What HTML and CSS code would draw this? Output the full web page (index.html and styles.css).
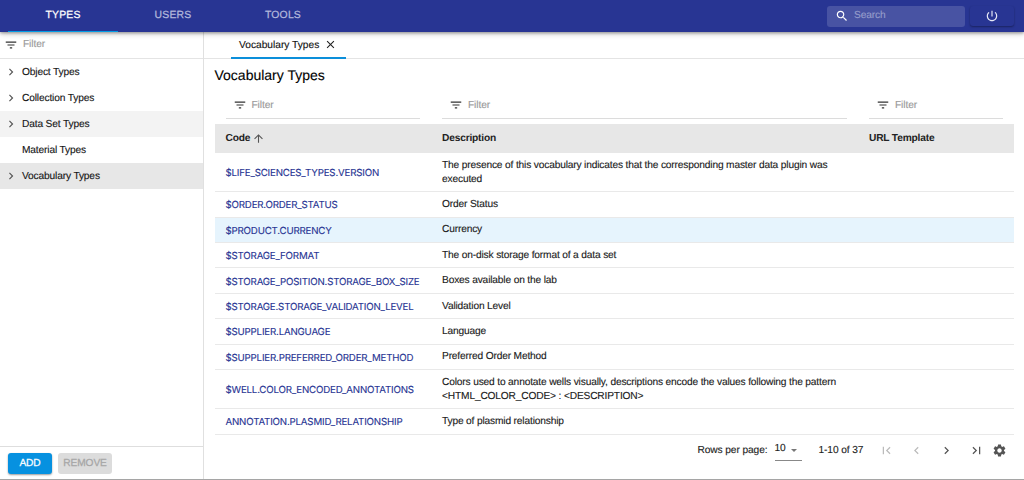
FILE: index.html
```
<!DOCTYPE html>
<html lang="en">
<head>
<meta charset="utf-8">
<title>Vocabulary Types</title>
<link rel="stylesheet" href="styles.css">
</head>
<body>
<svg class="defs" width="0" height="0">
  <symbol id="filter" viewBox="0 0 24 24"><path d="M10 18h4v-2h-4v2zM3 6v2h18V6H3zm3 7h12v-2H6v2z"/></symbol>
  <symbol id="right" viewBox="0 0 24 24"><path d="M10 6L8.59 7.41 13.17 12l-4.58 4.59L10 18l6-6z"/></symbol>
  <symbol id="left" viewBox="0 0 24 24"><path d="M15.41 7.41L14 6l-6 6 6 6 1.41-1.41L10.83 12z"/></symbol>
  <symbol id="first" viewBox="0 0 24 24"><path d="M18.41 16.59L13.82 12l4.59-4.59L17 6l-6 6 6 6zM6 6h2v12H6z"/></symbol>
  <symbol id="last" viewBox="0 0 24 24"><path d="M5.59 7.41L10.18 12l-4.59 4.59L7 18l6-6-6-6zM16 6h2v12h-2z"/></symbol>
</svg>
<div class="app">
  <header class="bar">
    <nav class="tabs">
      <span class="tab active">TYPES</span><span class="tab">USERS</span><span class="tab">TOOLS</span>
    </nav>
    <div class="search">
      <svg class="icon search-icon" viewBox="0 0 24 24"><path d="M15.5 14h-.79l-.28-.27C15.41 12.59 16 11.11 16 9.5 16 5.91 13.09 3 9.5 3S3 5.91 3 9.5 5.91 16 9.5 16c1.61 0 3.09-.59 4.23-1.57l.27.28v.79l5 4.99L20.49 19l-4.99-5zm-6 0C7.01 14 5 11.99 5 9.5S7.01 5 9.5 5 14 7.01 14 9.5 11.99 14 9.5 14z"/></svg>
      <span class="search-text">Search</span>
    </div>
    <div class="power"><svg class="icon power-icon" viewBox="0 0 24 24"><path d="M13 3h-2v10h2V3zm4.83 2.17l-1.42 1.42C17.99 7.86 19 9.81 19 12c0 3.87-3.13 7-7 7s-7-3.13-7-7c0-2.19 1.01-4.14 2.58-5.42L6.17 5.17C4.23 6.82 3 9.26 3 12c0 4.97 4.03 9 9 9s9-4.03 9-9c0-2.74-1.23-5.18-3.17-6.83z"/></svg></div>
  </header>
  <div class="body">
    <aside class="side">
      <div class="side-filter"><svg class="icon filter-icon"><use href="#filter"/></svg><span class="hint">Filter</span></div>
      <ul class="tree">
        <li class="node"><svg class="icon chevron"><use href="#right"/></svg><span>Object Types</span></li>
        <li class="node"><svg class="icon chevron"><use href="#right"/></svg><span>Collection Types</span></li>
        <li class="node hover"><svg class="icon chevron"><use href="#right"/></svg><span>Data Set Types</span></li>
        <li class="node leaf"><span>Material Types</span></li>
        <li class="node selected"><svg class="icon chevron"><use href="#right"/></svg><span>Vocabulary Types</span></li>
      </ul>
      <div class="side-actions"><span class="btn add">ADD</span><span class="btn remove">REMOVE</span></div>
    </aside>
    <main class="main">
      <div class="pages">
        <div class="page-tab"><span>Vocabulary Types</span><svg class="icon close" viewBox="0 0 24 24"><path d="M19 6.41L17.59 5 12 10.59 6.41 5 5 6.41 10.59 12 5 17.59 6.41 19 12 13.41 17.59 19 19 17.59 13.41 12z"/></svg></div>
      </div>
      <div class="content">
        <h1 class="title">Vocabulary Types</h1>
        <div class="row filters">
          <div class="cell"><div class="field"><svg class="icon filter-icon"><use href="#filter"/></svg><span class="hint">Filter</span></div></div>
          <div class="cell"><div class="field"><svg class="icon filter-icon"><use href="#filter"/></svg><span class="hint">Filter</span></div></div>
          <div class="cell"><div class="field"><svg class="icon filter-icon"><use href="#filter"/></svg><span class="hint">Filter</span></div></div>
        </div>
        <div class="row head">
          <div class="cell">Code<svg class="icon sort" viewBox="0 0 24 24"><path d="M4 12l1.41 1.41L11 7.83V20h2V7.83l5.58 5.59L20 12l-8-8-8 8z"/></svg></div>
          <div class="cell">Description</div>
          <div class="cell">URL Template</div>
        </div>
        <div class="row item tall"><div class="cell link">$LIFE_SCIENCES_TYPES.VERSION</div><div class="cell desc">The presence of this vocabulary indicates that the corresponding master data plugin was<br>executed</div></div>
        <div class="row item"><div class="cell link">$ORDER.ORDER_STATUS</div><div class="cell desc">Order Status</div></div>
        <div class="row item current"><div class="cell link">$PRODUCT.CURRENCY</div><div class="cell desc">Currency</div></div>
        <div class="row item"><div class="cell link">$STORAGE_FORMAT</div><div class="cell desc">The on-disk storage format of a data set</div></div>
        <div class="row item"><div class="cell link">$STORAGE_POSITION.STORAGE_BOX_SIZE</div><div class="cell desc">Boxes available on the lab</div></div>
        <div class="row item"><div class="cell link">$STORAGE.STORAGE_VALIDATION_LEVEL</div><div class="cell desc">Validation Level</div></div>
        <div class="row item"><div class="cell link">$SUPPLIER.LANGUAGE</div><div class="cell desc">Language</div></div>
        <div class="row item"><div class="cell link">$SUPPLIER.PREFERRED_ORDER_METHOD</div><div class="cell desc">Preferred Order Method</div></div>
        <div class="row item tall"><div class="cell link">$WELL.COLOR_ENCODED_ANNOTATIONS</div><div class="cell desc">Colors used to annotate wells visually, descriptions encode the values following the pattern<br>&lt;HTML_COLOR_CODE&gt; : &lt;DESCRIPTION&gt;</div></div>
        <div class="row item"><div class="cell link">ANNOTATION.PLASMID_RELATIONSHIP</div><div class="cell desc">Type of plasmid relationship</div></div>
        <div class="pager">
          <span class="rows-label">Rows per page:</span>
          <span class="select">10<i class="caret"></i></span>
          <span class="range">1-10 of 37</span>
          <svg class="icon nav off"><use href="#first"/></svg>
          <svg class="icon nav off"><use href="#left"/></svg>
          <svg class="icon nav"><use href="#right"/></svg>
          <svg class="icon nav"><use href="#last"/></svg>
          <svg class="icon gear" viewBox="0 0 24 24"><path d="M19.14 12.94c.04-.3.06-.61.06-.94 0-.32-.02-.64-.07-.94l2.03-1.58c.18-.14.23-.41.12-.61l-1.92-3.32c-.12-.22-.37-.29-.59-.22l-2.39.96c-.5-.38-1.03-.7-1.62-.94l-.36-2.54c-.04-.24-.24-.41-.48-.41h-3.84c-.24 0-.43.17-.47.41l-.36 2.54c-.59.24-1.13.57-1.62.94l-2.39-.96c-.22-.08-.47 0-.59.22L2.74 8.87c-.12.21-.08.47.12.61l2.03 1.58c-.05.3-.09.63-.09.94s.02.64.07.94l-2.03 1.58c-.18.14-.23.41-.12.61l1.92 3.32c.12.22.37.29.59.22l2.39-.96c.5.38 1.03.7 1.62.94l.36 2.54c.05.24.24.41.48.41h3.84c.24 0 .44-.17.47-.41l.36-2.54c.59-.24 1.13-.56 1.62-.94l2.39.96c.22.08.47 0 .59-.22l1.92-3.32c.12-.22.07-.47-.12-.61l-2.01-1.58zM12 15.6c-1.98 0-3.6-1.62-3.6-3.6s1.62-3.6 3.6-3.6 3.6 1.62 3.6 3.6-1.62 3.6-3.6 3.6z"/></svg>
        </div>
      </div>
    </main>
  </div>
</div>
</body>
</html>
```
FILE: styles.css
```
* { box-sizing: border-box; }
body { margin: 0; font-family: "Liberation Sans", Arial, sans-serif; font-size: 10.2px; letter-spacing: -.1px; color: #202020; background: #fff; overflow: hidden; text-rendering: geometricPrecision; -webkit-text-stroke: .12px; }
.defs { display: none; }
.icon { display: block; width: 16px; height: 16px; flex: none; fill: #555; }
.app { width: 1024px; height: 480px; display: flex; flex-direction: column; border-bottom: 1px solid #a5a5a5; }

.bar { position: relative; height: 32px; flex: none; display: flex; align-items: center; padding: 0 10px 0 8px; background: #283593; box-shadow: 0 1px 3px rgba(0,0,0,.35), 0 2px 6px rgba(0,0,0,.18); }
.tabs { display: flex; flex: 1; height: 32px; }
.tab { width: 110px; height: 32px; line-height: 32px; text-align: center; font-size: 10.4px; letter-spacing: .2px; color: #b4b9dc; -webkit-text-stroke: .25px; }
.tab.active { color: #fff; background: linear-gradient(#039be5, #039be5) left bottom / 100% 1px no-repeat; }
.search { display: flex; align-items: center; width: 138px; height: 21px; margin-right: 5px; padding: 0 0 1px 8px; border-radius: 3px; background: #4853a3; }
.search-icon { width: 14px; height: 14px; margin-top: 1px; fill: #fff; }
.search-text { margin-left: 5px; color: #969dcb; }
.power { display: flex; align-items: center; justify-content: center; width: 44px; height: 20px; border-radius: 3px; background: #283593; box-shadow: 0 1px 2px rgba(0,0,0,.35); }
.power-icon { width: 14px; height: 14px; fill: #e8eaf6; }

.body { flex: 1; display: flex; min-height: 0; }
.side { width: 204px; display: flex; flex-direction: column; border-right: 1px solid #e0e0e0; }
.side-filter { display: flex; align-items: center; height: 27px; padding: 0 0 1px 4px; border-bottom: 1px solid #e4e4e4; }
.filter-icon { width: 14px; height: 14px; fill: #333; }
.hint { margin-left: 5px; color: #999; }
.tree { flex: 1; margin: 0; padding: 0; list-style: none; color: #151515; letter-spacing: -.15px; }
.node { display: flex; align-items: center; height: 26.1px; padding-left: 4px; }
.chevron { width: 14px; height: 14px; margin-right: 4px; }
.leaf { padding-left: 22px; }
.hover { background: #f3f3f3; }
.selected { background: #e7e7e7; }
.side-actions { display: flex; gap: 6px; height: 33px; padding: 6px 8px; border-top: 1px solid #dedede; }
.btn { height: 21px; line-height: 21px; text-align: center; border-radius: 3px; -webkit-text-stroke: .25px; }
.add { width: 44px; background: #0691e0; color: #fff; box-shadow: 0 1px 2px rgba(0,0,0,.4); }
.remove { width: 54px; background: #dcdcdc; color: #a6a6a6; }

.main { flex: 1; min-width: 0; }
.pages { height: 27px; padding-left: 27px; border-bottom: 1px solid #e4e4e4; }
.page-tab { display: flex; align-items: center; width: 115px; height: 27px; padding-left: 8px; border-bottom: 2px solid #0c8fda; color: #111; letter-spacing: 0; white-space: nowrap; }
.page-tab span { padding-top: 1px; }
.close { width: 13px; height: 13px; margin-left: 5px; fill: #222; }
.content { padding: 0 10px 0 10.5px; }
.title { margin: 0; padding-top: 7px; height: 34px; font-size: 14px; line-height: 18px; font-weight: 400; letter-spacing: 0; color: #000; }
.row { display: grid; grid-template-columns: 216.5px 427px 1fr; }
.cell { padding: 0 11px; white-space: nowrap; }
.filters { height: 31px; }
.field { display: flex; align-items: center; height: 26px; padding: 0 0 1px 7px; border-bottom: 1px solid #dcdcdc; }
.head { height: 29px; background: #e7e7e7; font-weight: 700; color: #222; line-height: 28px; letter-spacing: -.18px; -webkit-text-stroke: 0; }
.head .cell { display: flex; align-items: center; }
.sort { width: 13px; height: 13px; margin-left: 2px; }
.item { height: 25.4px; border-bottom: 1px solid #e9e9e9; align-items: center; }
.tall { height: 39.2px; }
.current { background: #e6f4fd; }
.link { color: #283593; padding-top: 3px; font-family: Inter, "Liberation Sans", sans-serif; font-size: 9.7px; letter-spacing: -.18px; }
.desc { line-height: 13.8px; letter-spacing: -.16px; padding-top: 1px; }
.pager { display: flex; align-items: center; height: 32px; padding-left: 483px; white-space: nowrap; color: #222; }
.rows-label { width: 77px; }
.select { display: flex; align-items: center; width: 27px; height: 20px; padding-bottom: 3px; border-bottom: 1px solid #888; }
.caret { margin-left: 5px; margin-top: 3px; border: 3.5px solid transparent; border-top-color: #777; border-bottom: 0; }
.range { width: 60px; margin-left: 17px; }
.nav { width: 15px; height: 15px; margin-right: 15px; }
.nav.off { fill: #bbb; }
.gear { width: 15px; height: 15px; margin-left: -7px; }
```
